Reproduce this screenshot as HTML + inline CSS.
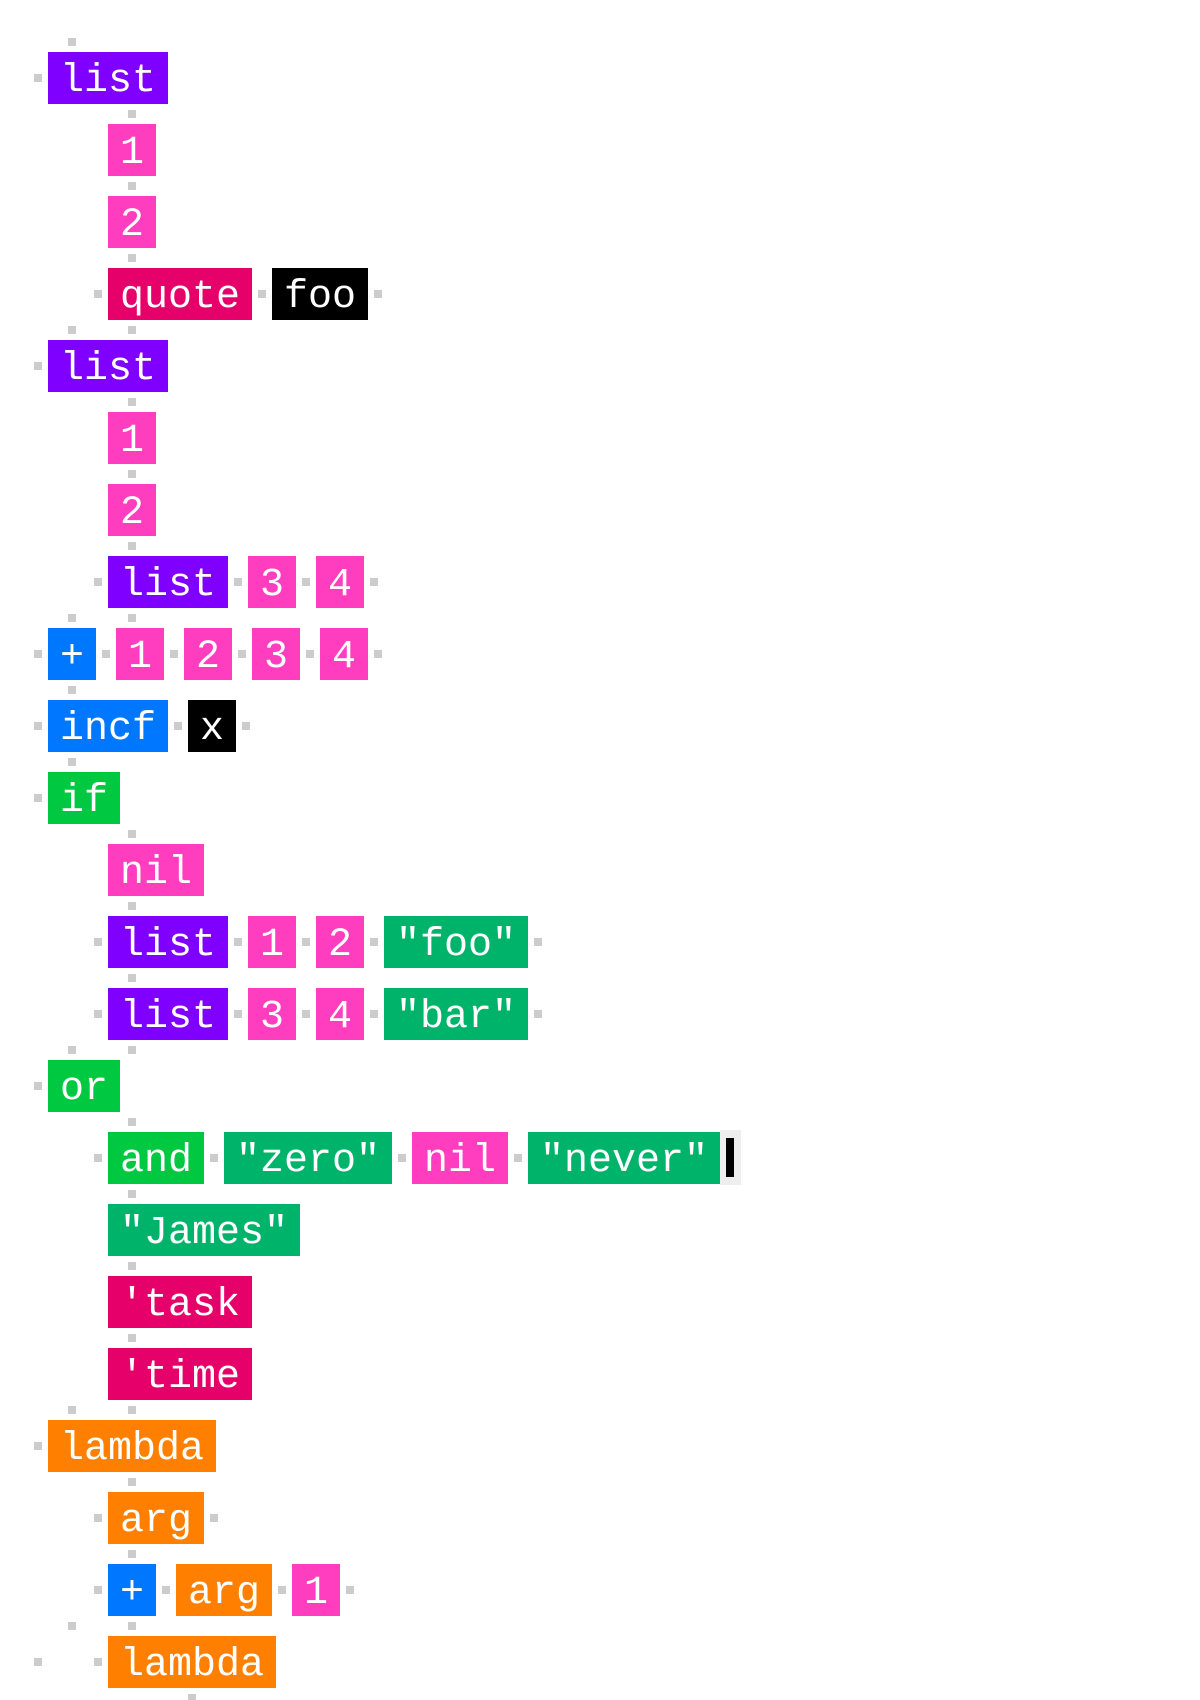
<!DOCTYPE html>
<html><head><meta charset="utf-8"><style>
html,body{margin:0;padding:0;background:#fff;width:1200px;height:1700px;overflow:hidden;position:relative}
.b{position:absolute;height:52px;line-height:60px;overflow:hidden;font-family:"Liberation Mono",monospace;font-size:40px;color:#fff;padding:0 12px;white-space:pre}
.d{position:absolute;width:8px;height:8px;background:#ccc}
.pu{background:#8000ff}.pk{background:#ff3dbf}.cr{background:#e6006a}.bk{background:#000}
.bl{background:#0077ff}.gr{background:#00c840}.st{background:#00b36b}.or{background:#ff7f00}
</style></head><body>
<div class="d" style="left:68px;top:38px"></div><div class="d" style="left:34px;top:74px"></div>
<div class="b pu" style="left:48px;top:52px">list</div>
<div class="d" style="left:128px;top:110px"></div>
<div class="b pk" style="left:108px;top:124px">1</div>
<div class="d" style="left:128px;top:182px"></div>
<div class="b pk" style="left:108px;top:196px">2</div>
<div class="d" style="left:128px;top:254px"></div><div class="d" style="left:94px;top:290px"></div>
<div class="b cr" style="left:108px;top:268px">quote</div><div class="d" style="left:258px;top:290px"></div>
<div class="b bk" style="left:272px;top:268px">foo</div><div class="d" style="left:374px;top:290px"></div>
<div class="d" style="left:68px;top:326px"></div><div class="d" style="left:128px;top:326px"></div><div class="d" style="left:34px;top:362px"></div>
<div class="b pu" style="left:48px;top:340px">list</div>
<div class="d" style="left:128px;top:398px"></div>
<div class="b pk" style="left:108px;top:412px">1</div>
<div class="d" style="left:128px;top:470px"></div>
<div class="b pk" style="left:108px;top:484px">2</div>
<div class="d" style="left:128px;top:542px"></div><div class="d" style="left:94px;top:578px"></div>
<div class="b pu" style="left:108px;top:556px">list</div><div class="d" style="left:234px;top:578px"></div>
<div class="b pk" style="left:248px;top:556px">3</div><div class="d" style="left:302px;top:578px"></div>
<div class="b pk" style="left:316px;top:556px">4</div><div class="d" style="left:370px;top:578px"></div>
<div class="d" style="left:68px;top:614px"></div><div class="d" style="left:128px;top:614px"></div><div class="d" style="left:34px;top:650px"></div>
<div class="b bl" style="left:48px;top:628px">+</div><div class="d" style="left:102px;top:650px"></div>
<div class="b pk" style="left:116px;top:628px">1</div><div class="d" style="left:170px;top:650px"></div>
<div class="b pk" style="left:184px;top:628px">2</div><div class="d" style="left:238px;top:650px"></div>
<div class="b pk" style="left:252px;top:628px">3</div><div class="d" style="left:306px;top:650px"></div>
<div class="b pk" style="left:320px;top:628px">4</div><div class="d" style="left:374px;top:650px"></div>
<div class="d" style="left:68px;top:686px"></div><div class="d" style="left:34px;top:722px"></div>
<div class="b bl" style="left:48px;top:700px">incf</div><div class="d" style="left:174px;top:722px"></div>
<div class="b bk" style="left:188px;top:700px">x</div><div class="d" style="left:242px;top:722px"></div>
<div class="d" style="left:68px;top:758px"></div><div class="d" style="left:34px;top:794px"></div>
<div class="b gr" style="left:48px;top:772px">if</div>
<div class="d" style="left:128px;top:830px"></div>
<div class="b pk" style="left:108px;top:844px">nil</div>
<div class="d" style="left:128px;top:902px"></div><div class="d" style="left:94px;top:938px"></div>
<div class="b pu" style="left:108px;top:916px">list</div><div class="d" style="left:234px;top:938px"></div>
<div class="b pk" style="left:248px;top:916px">1</div><div class="d" style="left:302px;top:938px"></div>
<div class="b pk" style="left:316px;top:916px">2</div><div class="d" style="left:370px;top:938px"></div>
<div class="b st" style="left:384px;top:916px">"foo"</div><div class="d" style="left:534px;top:938px"></div>
<div class="d" style="left:128px;top:974px"></div><div class="d" style="left:94px;top:1010px"></div>
<div class="b pu" style="left:108px;top:988px">list</div><div class="d" style="left:234px;top:1010px"></div>
<div class="b pk" style="left:248px;top:988px">3</div><div class="d" style="left:302px;top:1010px"></div>
<div class="b pk" style="left:316px;top:988px">4</div><div class="d" style="left:370px;top:1010px"></div>
<div class="b st" style="left:384px;top:988px">"bar"</div><div class="d" style="left:534px;top:1010px"></div>
<div class="d" style="left:68px;top:1046px"></div><div class="d" style="left:128px;top:1046px"></div><div class="d" style="left:34px;top:1082px"></div>
<div class="b gr" style="left:48px;top:1060px">or</div>
<div class="d" style="left:128px;top:1118px"></div><div class="d" style="left:94px;top:1154px"></div>
<div class="b gr" style="left:108px;top:1132px">and</div><div class="d" style="left:210px;top:1154px"></div>
<div class="b st" style="left:224px;top:1132px">"zero"</div><div class="d" style="left:398px;top:1154px"></div>
<div class="b pk" style="left:412px;top:1132px">nil</div><div class="d" style="left:514px;top:1154px"></div>
<div class="b st" style="left:528px;top:1132px">"never"</div>
<div style="position:absolute;left:720px;top:1130px;width:21px;height:55px;background:#eee"></div>
<div style="position:absolute;left:726px;top:1138px;width:8px;height:39px;background:#000"></div>
<div class="d" style="left:128px;top:1190px"></div>
<div class="b st" style="left:108px;top:1204px">"James"</div>
<div class="d" style="left:128px;top:1262px"></div>
<div class="b cr" style="left:108px;top:1276px">'task</div>
<div class="d" style="left:128px;top:1334px"></div>
<div class="b cr" style="left:108px;top:1348px">'time</div>
<div class="d" style="left:68px;top:1406px"></div><div class="d" style="left:128px;top:1406px"></div><div class="d" style="left:34px;top:1442px"></div>
<div class="b or" style="left:48px;top:1420px">lambda</div>
<div class="d" style="left:128px;top:1478px"></div><div class="d" style="left:94px;top:1514px"></div>
<div class="b or" style="left:108px;top:1492px">arg</div><div class="d" style="left:210px;top:1514px"></div>
<div class="d" style="left:128px;top:1550px"></div><div class="d" style="left:94px;top:1586px"></div>
<div class="b bl" style="left:108px;top:1564px">+</div><div class="d" style="left:162px;top:1586px"></div>
<div class="b or" style="left:176px;top:1564px">arg</div><div class="d" style="left:278px;top:1586px"></div>
<div class="b pk" style="left:292px;top:1564px">1</div><div class="d" style="left:346px;top:1586px"></div>
<div class="d" style="left:68px;top:1622px"></div><div class="d" style="left:128px;top:1622px"></div>
<div class="d" style="left:34px;top:1658px"></div><div class="d" style="left:94px;top:1658px"></div>
<div class="b or" style="left:108px;top:1636px">lambda</div>
<div class="d" style="left:188px;top:1694px"></div>
</body></html>
